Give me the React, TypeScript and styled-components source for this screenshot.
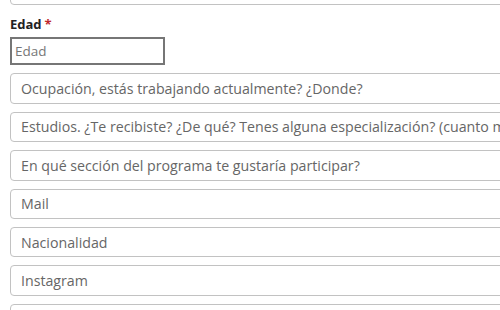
import styled, { createGlobalStyle } from "styled-components";

const Global = createGlobalStyle`
    html, body {
        margin: 0;
        padding: 0;
        background: #fff;
        overflow: hidden;
    }
    body {
        font-family: "Open Sans", "Noto Sans", sans-serif;
    }
`;

const Form = styled.form`
    width: 700px;
    padding-left: 10px;
    margin-top: -25px;
    display: flex;
    flex-direction: column;
`;

const Field = styled.input`
    box-sizing: border-box;
    width: 100%;
    height: 30.4px;
    margin-bottom: 8px;
    padding: 0 10px;
    border: 1px solid #c2c2c2;
    border-radius: 4px;
    font-family: "Open Sans", "Noto Sans", sans-serif;
    font-size: 14.2px;
    color: #333;
    background: #fff;
    outline: none;

    &::placeholder {
        color: #666;
    }
`;

const Label = styled.label`
    margin-top: 2px;
    height: 18px;
    font-size: 13px;
    font-weight: 700;
    color: #222;
    line-height: 18px;
`;

const Required = styled.span`
    color: #c0282d;
    margin-left: 3px;
`;

const SmallInput = styled.input`
    box-sizing: border-box;
    width: 155px;
    height: 28px;
    margin: 4px 0 8px;
    padding: 0 3px;
    border: 2px solid #767676;
    border-radius: 0;
    font-family: "Open Sans", "Noto Sans", sans-serif;
    font-size: 13.5px;
    outline: none;

    &::placeholder {
        color: #777;
    }
`;

const fields = [
    "Ocupación, estás trabajando actualmente? ¿Donde?",
    "Estudios. ¿Te recibiste? ¿De qué? Tenes alguna especialización? (cuanto más detalle mejor)",
    "En qué sección del programa te gustaría participar?",
    "Mail",
    "Nacionalidad",
    "Instagram",
    "¿Cómo te enteraste de la convocatoria?",
];

export default function App() {
    return <>
        <Global />
        <Form>
            <Field placeholder="Nombre y apellido" />
            <Label htmlFor="edad">Edad<Required>*</Required></Label>
            <SmallInput id="edad" placeholder="Edad" />
            {fields.map((f) => <Field key={f} placeholder={f} />)}
        </Form>
    </>;
}
